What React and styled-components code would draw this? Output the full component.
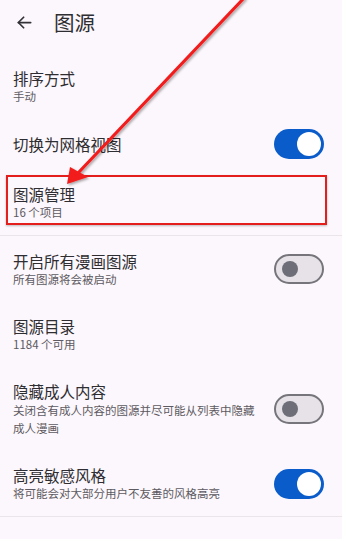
import React from "react";
import styled, { createGlobalStyle } from "styled-components";

const Global = createGlobalStyle`
  html, body { margin: 0; padding: 0; background: #fcf7fc; }
  body { font-family: "Noto Sans CJK SC", "Noto Sans", Roboto, sans-serif; overflow: hidden; }
`;

const Screen = styled.div`
  position: relative;
  width: 342px;
  height: 539px;
  overflow: hidden;
  background: #fcf7fc;
`;

const Header = styled.div`
  display: flex;
  align-items: center;
  height: 44px;
  padding-left: 14px;
  gap: 19px;
`;

const Title = styled.div`
  font-size: 20.5px;
  color: #2e2d31;
  line-height: 1;
  padding-top: 1px;
`;

const Group = styled.div`
  display: flex;
  flex-direction: column;
  padding-top: ${(p) => p.$top || 0}px;
`;

const Row = styled.div`
  position: relative;
  display: flex;
  align-items: center;
  justify-content: space-between;
  min-height: ${(p) => p.$h || 58}px;
  padding: ${(p) => p.$pad || 0}px 18px ${(p) => p.$pad || 0}px 13px;
  box-sizing: border-box;
`;

const Texts = styled.div`
  display: flex;
  flex-direction: column;
  flex: 1;
  min-width: 0;
  padding-right: 14px;
`;

const Label = styled.div`
  font-size: 15.5px;
  line-height: 20px;
  color: #2e2d31;
`;

const Sub = styled.div`
  font-size: 11.5px;
  line-height: ${(p) => (p.$multi ? 18 : 17)}px;
  color: #5d5a61;
`;

const Divider = styled.div`
  height: 1px;
  background: #ebe5ea;
  margin-top: ${(p) => p.$mt || 0}px;
`;

const Track = styled.div`
  position: relative;
  flex: none;
  width: 50px;
  height: 30px;
  border-radius: 15px;
  box-sizing: border-box;
  background: ${(p) => (p.$on ? "#0a5ccb" : "#e7e2e8")};
  border: ${(p) => (p.$on ? "none" : "2px solid #76757c")};
`;

const Thumb = styled.div`
  position: absolute;
  top: 50%;
  transform: translateY(-50%);
  border-radius: 50%;
  width: ${(p) => (p.$on ? 24 : 16)}px;
  height: ${(p) => (p.$on ? 24 : 16)}px;
  background: ${(p) => (p.$on ? "#ffffff" : "#6d6e77")};
  ${(p) => (p.$on ? "right: 3px;" : "left: 6px;")}
`;

const Highlight = styled.div`
  position: absolute;
  left: 6px;
  right: 15px;
  top: 2px;
  height: 50px;
  border: 2px solid #e41d1d;
  box-sizing: border-box;
  box-shadow: 0 1px 2px rgba(0, 0, 0, 0.25);
  pointer-events: none;
`;

const ArrowLayer = styled.svg`
  position: absolute;
  left: 0;
  top: 0;
  width: 342px;
  height: 539px;
  pointer-events: none;
`;

function Toggle({ on }) {
  return (
    <Track $on={on}>
      <Thumb $on={on} />
    </Track>
  );
}

function BackIcon() {
  return (
    <svg width="21" height="21" viewBox="0 0 24 24" fill="none" stroke="#333236" strokeWidth="2" strokeLinecap="round" strokeLinejoin="round">
      <path d="M19 12H5" />
      <path d="M11 6l-6 6 6 6" />
    </svg>
  );
}

export default function App() {
  return (
    <>
      <Global />
      <Screen>
        <Header>
          <BackIcon />
          <Title>图源</Title>
        </Header>
        <Group $top={13}>
          <Row>
            <Texts>
              <Label>排序方式</Label>
              <Sub>手动</Sub>
            </Texts>
          </Row>
          <Row>
            <Texts>
              <Label>切换为网格视图</Label>
            </Texts>
            <Toggle on />
          </Row>
          <Row>
            <Texts>
              <Label>图源管理</Label>
              <Sub>16 个项目</Sub>
            </Texts>
            <Highlight />
          </Row>
        </Group>
        <Divider $mt={4} />
        <Group>
          <Row $pad={14} $h={66}>
            <Texts>
              <Label>开启所有漫画图源</Label>
              <Sub>所有图源将会被启动</Sub>
            </Texts>
            <Toggle />
          </Row>
          <Row $pad={14} $h={65}>
            <Texts>
              <Label>图源目录</Label>
              <Sub>1184 个可用</Sub>
            </Texts>
          </Row>
          <Row $pad={14} $h={84}>
            <Texts>
              <Label>隐藏成人内容</Label>
              <Sub $multi>关闭含有成人内容的图源并尽可能从列表中隐藏成人漫画</Sub>
            </Texts>
            <Toggle />
          </Row>
          <Row $pad={14} $h={65}>
            <Texts>
              <Label>高亮敏感风格</Label>
              <Sub>将可能会对大部分用户不友善的风格高亮</Sub>
            </Texts>
            <Toggle on />
          </Row>
        </Group>
        <Divider />
        <Group>
          <Row $pad={14} $h={65}>
            <Texts>
              <Label>处理链接</Label>
            </Texts>
          </Row>
        </Group>
        <ArrowLayer viewBox="0 0 342 539">
          <defs>
            <filter id="sh" x="-20%" y="-20%" width="140%" height="140%">
              <feDropShadow dx="1.5" dy="1.5" stdDeviation="1" floodColor="#000" floodOpacity="0.35" />
            </filter>
          </defs>
          <g filter="url(#sh)">
            <line x1="244" y1="-2" x2="79" y2="172" stroke="#f21c1c" strokeWidth="3.2" strokeLinecap="round" />
            <polygon points="67,184 70,167 88,177" fill="#f21c1c" />
          </g>
        </ArrowLayer>
      </Screen>
    </>
  );
}
